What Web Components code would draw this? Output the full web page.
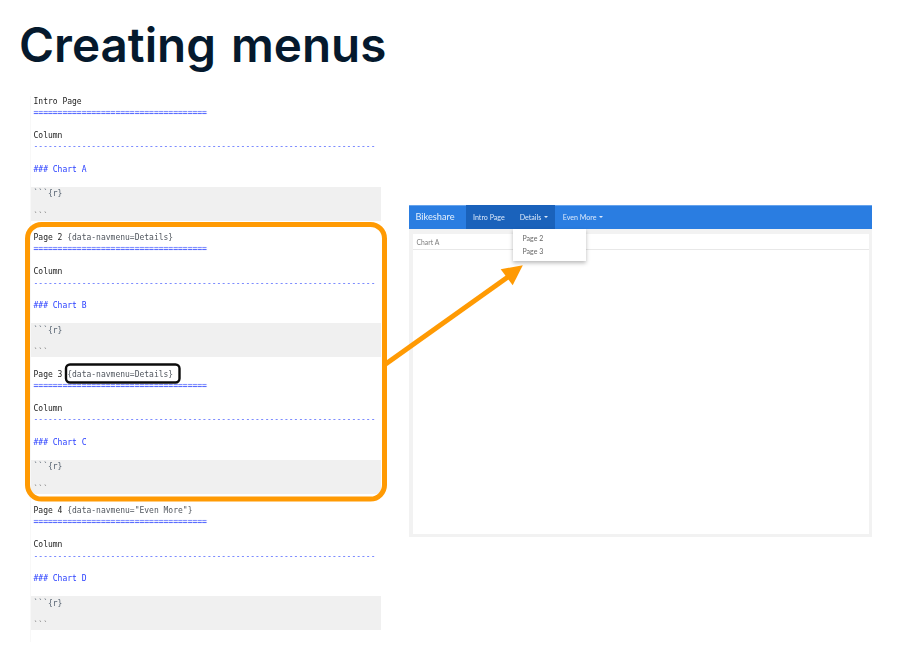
<!DOCTYPE html>
<html>
<head>
<meta charset="utf-8">
<title>Creating menus</title>
<style>
  html, body { margin: 0; background: #fff; }
  body { width: 910px; height: 653px; overflow: hidden; position: relative; font-family: "Inter", sans-serif; }
  .row { display: flex; align-items: flex-start; padding-left: 30px; }
</style>
</head>
<body>
  <slide-title>Creating menus</slide-title>
  <div class="row">
    <code-panel>
      <code-page name="Intro Page" chart="A"></code-page>
      <code-page name="Page 2" attr="{data-navmenu=Details}" chart="B"></code-page>
      <code-page name="Page 3" attr="{data-navmenu=Details}" chart="C"></code-page>
      <code-page name="Page 4" attr='{data-navmenu="Even More"}' chart="D"></code-page>
    </code-panel>
    <dash-mock>
      <nav-item slot="nav" active>Intro Page</nav-item>
      <nav-item slot="nav" active caret>Details</nav-item>
      <nav-item slot="nav" caret>Even More</nav-item>
    </dash-mock>
  </div>
  <slide-callouts></slide-callouts>

<script>
class SlideTitle extends HTMLElement {
  constructor() {
    super();
    this.attachShadow({ mode: "open" });
    this.shadowRoot.innerHTML = `
    <style>
      :host { display: block; box-sizing: border-box; height: 95.5px; padding: 15px 0 0 19px; }
      h1 {
        margin: 0;
        font: 600 47.6px/60px "Inter", "Open Sans", sans-serif;
        word-spacing: 3px;
        color: #05192d;
      }
    </style>
    <h1><slot></slot></h1>`;
  }
}

class CodePanel extends HTMLElement {
  constructor() {
    super();
    this.attachShadow({ mode: "open" });
    this.shadowRoot.innerHTML = `
    <style>
      :host { display: block; width: 351px; flex: none; border-left: 1px solid #f8f8f8; box-sizing: border-box; }
    </style>
    <slot></slot>`;
  }
}

class CodePage extends HTMLElement {
  constructor() {
    super();
    this.attachShadow({ mode: "open" });
  }
  connectedCallback() {
    const attr = this.getAttribute("attr");
    this.shadowRoot.innerHTML = `
    <style>
      :host {
        display: block;
        font: 8px/11.375px "DejaVu Sans Mono", "Liberation Mono", monospace;
        color: #222;
        filter: blur(0.25px);
      }
      div { height: 11.375px; padding-left: 2.5px; white-space: pre; }
      .rule { color: #4a5fff; }
      .rule.double { color: #4257ff; text-shadow: 0 0 1px #6b7dff; }
      .chart { color: #2a40ff; }
      .attr { color: #50565e; }
      .fence { box-sizing: border-box; background: #f0f0f0; height: 34.125px; padding-top: 1.6px; }
      .fence div { color: #4f5c6b; }
      .fence .end { color: #777; }
    </style>
    <div>${this.getAttribute("name")}${attr ? ` <span class="attr">${attr}</span>` : ""}</div>
    <div class="rule double">${"=".repeat(36)}</div>
    <div></div>
    <div>Column</div>
    <div class="rule">${"-".repeat(71)}</div>
    <div></div>
    <div class="chart">### Chart ${this.getAttribute("chart")}</div>
    <div></div>
    <section class="fence">
      <div>\`\`\`{r}</div>
      <div></div>
      <div class="end">\`\`\`</div>
    </section>
    <div></div>`;
  }
}

class NavItem extends HTMLElement {
  constructor() {
    super();
    this.attachShadow({ mode: "open" });
    this.shadowRoot.innerHTML = `
    <style>
      :host {
        display: flex;
        align-items: center;
        height: 100%;
        padding: 0 7.5px;
        font-size: 7.1px;
        color: #dbe9fb;
      }
      :host([active]) { background: #1a62bb; }
      .caret { display: none; margin-left: 2.4px; border: 2px solid transparent; border-top-color: currentColor; border-bottom: 0; }
      :host([caret]) .caret { display: block; }
    </style>
    <slot></slot><span class="caret"></span>`;
  }
}

class DashMock extends HTMLElement {
  constructor() {
    super();
    this.attachShadow({ mode: "open" });
    this.shadowRoot.innerHTML = `
    <style>
      :host {
        display: block;
        position: relative;
        flex: none;
        width: 463px;
        margin: 109.5px 0 0 28px;
        font-family: "Lato", "Open Sans", sans-serif;
        filter: blur(0.25px);
      }
      nav {
        display: flex;
        align-items: stretch;
        height: 24px;
        background: #2a7de1;
        box-shadow: inset 0 1px 0 #66a3ec;
      }
      .brand { width: 56.5px; padding-left: 6.5px; box-sizing: border-box; line-height: 23px; font-size: 9.2px; color: #e6f0fc; }
      .items { display: flex; height: 100%; }
      .body { box-sizing: border-box; height: 308px; padding: 5px 3.5px 3.5px; background: #f2f2f2; }
      .card { height: 100%; background: #fff; }
      .head {
        box-sizing: border-box;
        height: 16px;
        padding-left: 4px;
        border-bottom: 1px solid #e8e8e8;
        font-size: 6.8px;
        line-height: 17px;
        color: #7d7d7d;
      }
      .menu {
        position: absolute;
        left: 104px;
        top: 24px;
        width: 72.5px;
        height: 32px;
        padding: 3px 0 0 9.5px;
        box-sizing: border-box;
        background: #fff;
        box-shadow: 0 1.5px 4px rgba(0,0,0,.28);
        font-size: 7px;
        line-height: 13px;
        color: #666;
      }
    </style>
    <nav>
      <div class="brand">Bikeshare</div>
      <div class="items"><slot name="nav"></slot></div>
    </nav>
    <div class="body">
      <div class="card"><div class="head">Chart A</div></div>
    </div>
    <div class="menu"><div>Page 2</div><div>Page 3</div></div>`;
  }
}

// orange box, arrow and the black highlight lie over the slide content
class SlideCallouts extends HTMLElement {
  constructor() {
    super();
    this.attachShadow({ mode: "open" });
    this.shadowRoot.innerHTML = `
    <style>
      :host { position: absolute; left: 0; top: 0; width: 910px; height: 653px; pointer-events: none; }
      svg { display: block; }
    </style>
    <svg width="910" height="653" viewBox="0 0 910 653" fill="none">
      <rect x="27.5" y="224.5" width="357" height="274.5" rx="14" stroke="#ff9a03" stroke-width="5"/>
      <path d="M385 364.5 L510 275.5" stroke="#ff9a03" stroke-width="5"/>
      <path d="M522.8 265.3 L500.7 269.3 L512.7 285.3 Z" fill="#ff9a03"/>
      <rect x="66" y="364.5" width="113.5" height="18" rx="4" stroke="#0c0c0c" stroke-width="2.4"/>
    </svg>`;
  }
}

customElements.define("slide-title", SlideTitle);
customElements.define("code-panel", CodePanel);
customElements.define("code-page", CodePage);
customElements.define("nav-item", NavItem);
customElements.define("dash-mock", DashMock);
customElements.define("slide-callouts", SlideCallouts);
</script>
</body>
</html>
